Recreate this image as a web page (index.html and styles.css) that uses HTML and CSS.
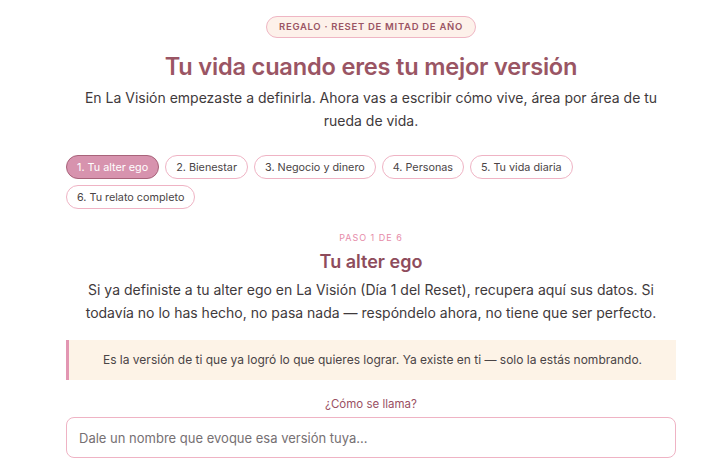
FILE: index.html
```html
<!DOCTYPE html>
<html lang="es">
<head>
<meta charset="utf-8">
<title>Tu vida cuando eres tu mejor versión</title>
<link rel="stylesheet" href="styles.css">
</head>
<body>
<main class="page">
  <header class="intro">
    <span class="badge">Regalo · Reset de mitad de año</span>
    <h1 class="title">Tu vida cuando eres tu mejor versión</h1>
    <p class="lead">En La Visión empezaste a definirla. Ahora vas a escribir cómo vive, área por área de tu rueda de vida.</p>
  </header>

  <nav class="steps">
    <button class="step is-active">1. Tu alter ego</button>
    <button class="step">2. Bienestar</button>
    <button class="step">3. Negocio y dinero</button>
    <button class="step">4. Personas</button>
    <button class="step">5. Tu vida diaria</button>
    <button class="step">6. Tu relato completo</button>
  </nav>

  <section class="panel">
    <div class="eyebrow">Paso 1 de 6</div>
    <h2 class="panel-title">Tu alter ego</h2>
    <p class="panel-text">Si ya definiste a tu alter ego en La Visión (Día 1 del Reset), recupera aquí sus datos. Si todavía no lo has hecho, no pasa nada — respóndelo ahora, no tiene que ser perfecto.</p>
    <div class="note">Es la versión de ti que ya logró lo que quieres lograr. Ya existe en ti — solo la estás nombrando.</div>
    <label class="field-label" for="nombre">¿Cómo se llama?</label>
    <input class="field" id="nombre" type="text" placeholder="Dale un nombre que evoque esa versión tuya...">
  </section>
</main>
</body>
</html>
```
FILE: styles.css
```css
* { box-sizing: border-box; }

body {
  margin: 0;
  background: #ffffff;
  font-family: Inter, "Noto Sans", sans-serif;
  color: #4a4446;
}

.page {
  margin: 0 44px 0 66px;
  padding-top: 16px;
}

.intro {
  display: flex;
  flex-direction: column;
  align-items: center;
  text-align: center;
}

.badge {
  display: inline-block;
  height: 22px;
  line-height: 20px;
  padding: 0 12px;
  border: 1px solid #efb6c4;
  border-radius: 11px;
  background: #fdf1ea;
  color: #9a5464;
  font-size: 9.5px;
  font-weight: 600;
  letter-spacing: 0.7px;
  text-transform: uppercase;
}

.title {
  margin: 14px 0 0;
  font-size: 23.6px;
  line-height: 30px;
  font-weight: 600;
  color: #9a5564;
  letter-spacing: -0.2px;
}

.lead {
  margin: 4px 0 0;
  font-size: 14px;
  line-height: 23px;
  color: #3f3a3c;
  max-width: 600px;
}

.steps {
  display: flex;
  flex-wrap: wrap;
  gap: 6px;
  margin-top: 23px;
}

.step {
  height: 24px;
  padding: 0 10px;
  border: 1px solid #efb3c4;
  border-radius: 12px;
  background: #ffffff;
  color: #4a4446;
  font-family: inherit;
  font-size: 10.8px;
}

.step.is-active {
  background: #d793ae;
  border-color: #a8637a;
  color: #ffffff;
}

.panel {
  display: flex;
  flex-direction: column;
  align-items: center;
  text-align: center;
  margin-top: 23px;
}

.eyebrow {
  font-size: 9px;
  letter-spacing: 1px;
  text-transform: uppercase;
  color: #e68aa8;
}

.panel-title {
  margin: 7px 0 0;
  font-size: 18px;
  line-height: 24px;
  font-weight: 600;
  color: #8e4c5c;
}

.panel-text {
  margin: 4px 0 0;
  font-size: 14px;
  line-height: 23px;
  color: #3f3a3c;
  max-width: 590px;
}

.note {
  align-self: stretch;
  margin-top: 16px;
  padding: 12px 16px;
  background: #fdf3e7;
  border-left: 3px solid #e296b2;
  font-size: 12px;
  line-height: 16px;
  color: #4a4446;
}

.field-label {
  margin-top: 17px;
  font-size: 11.5px;
  color: #9a5063;
}

.field {
  align-self: stretch;
  margin-top: 6px;
  height: 41px;
  padding: 0 12px;
  border: 1px solid #efb3c4;
  border-radius: 8px;
  font-family: inherit;
  font-size: 13px;
  color: #4a4446;
}

.field::placeholder { color: #767073; }
```
